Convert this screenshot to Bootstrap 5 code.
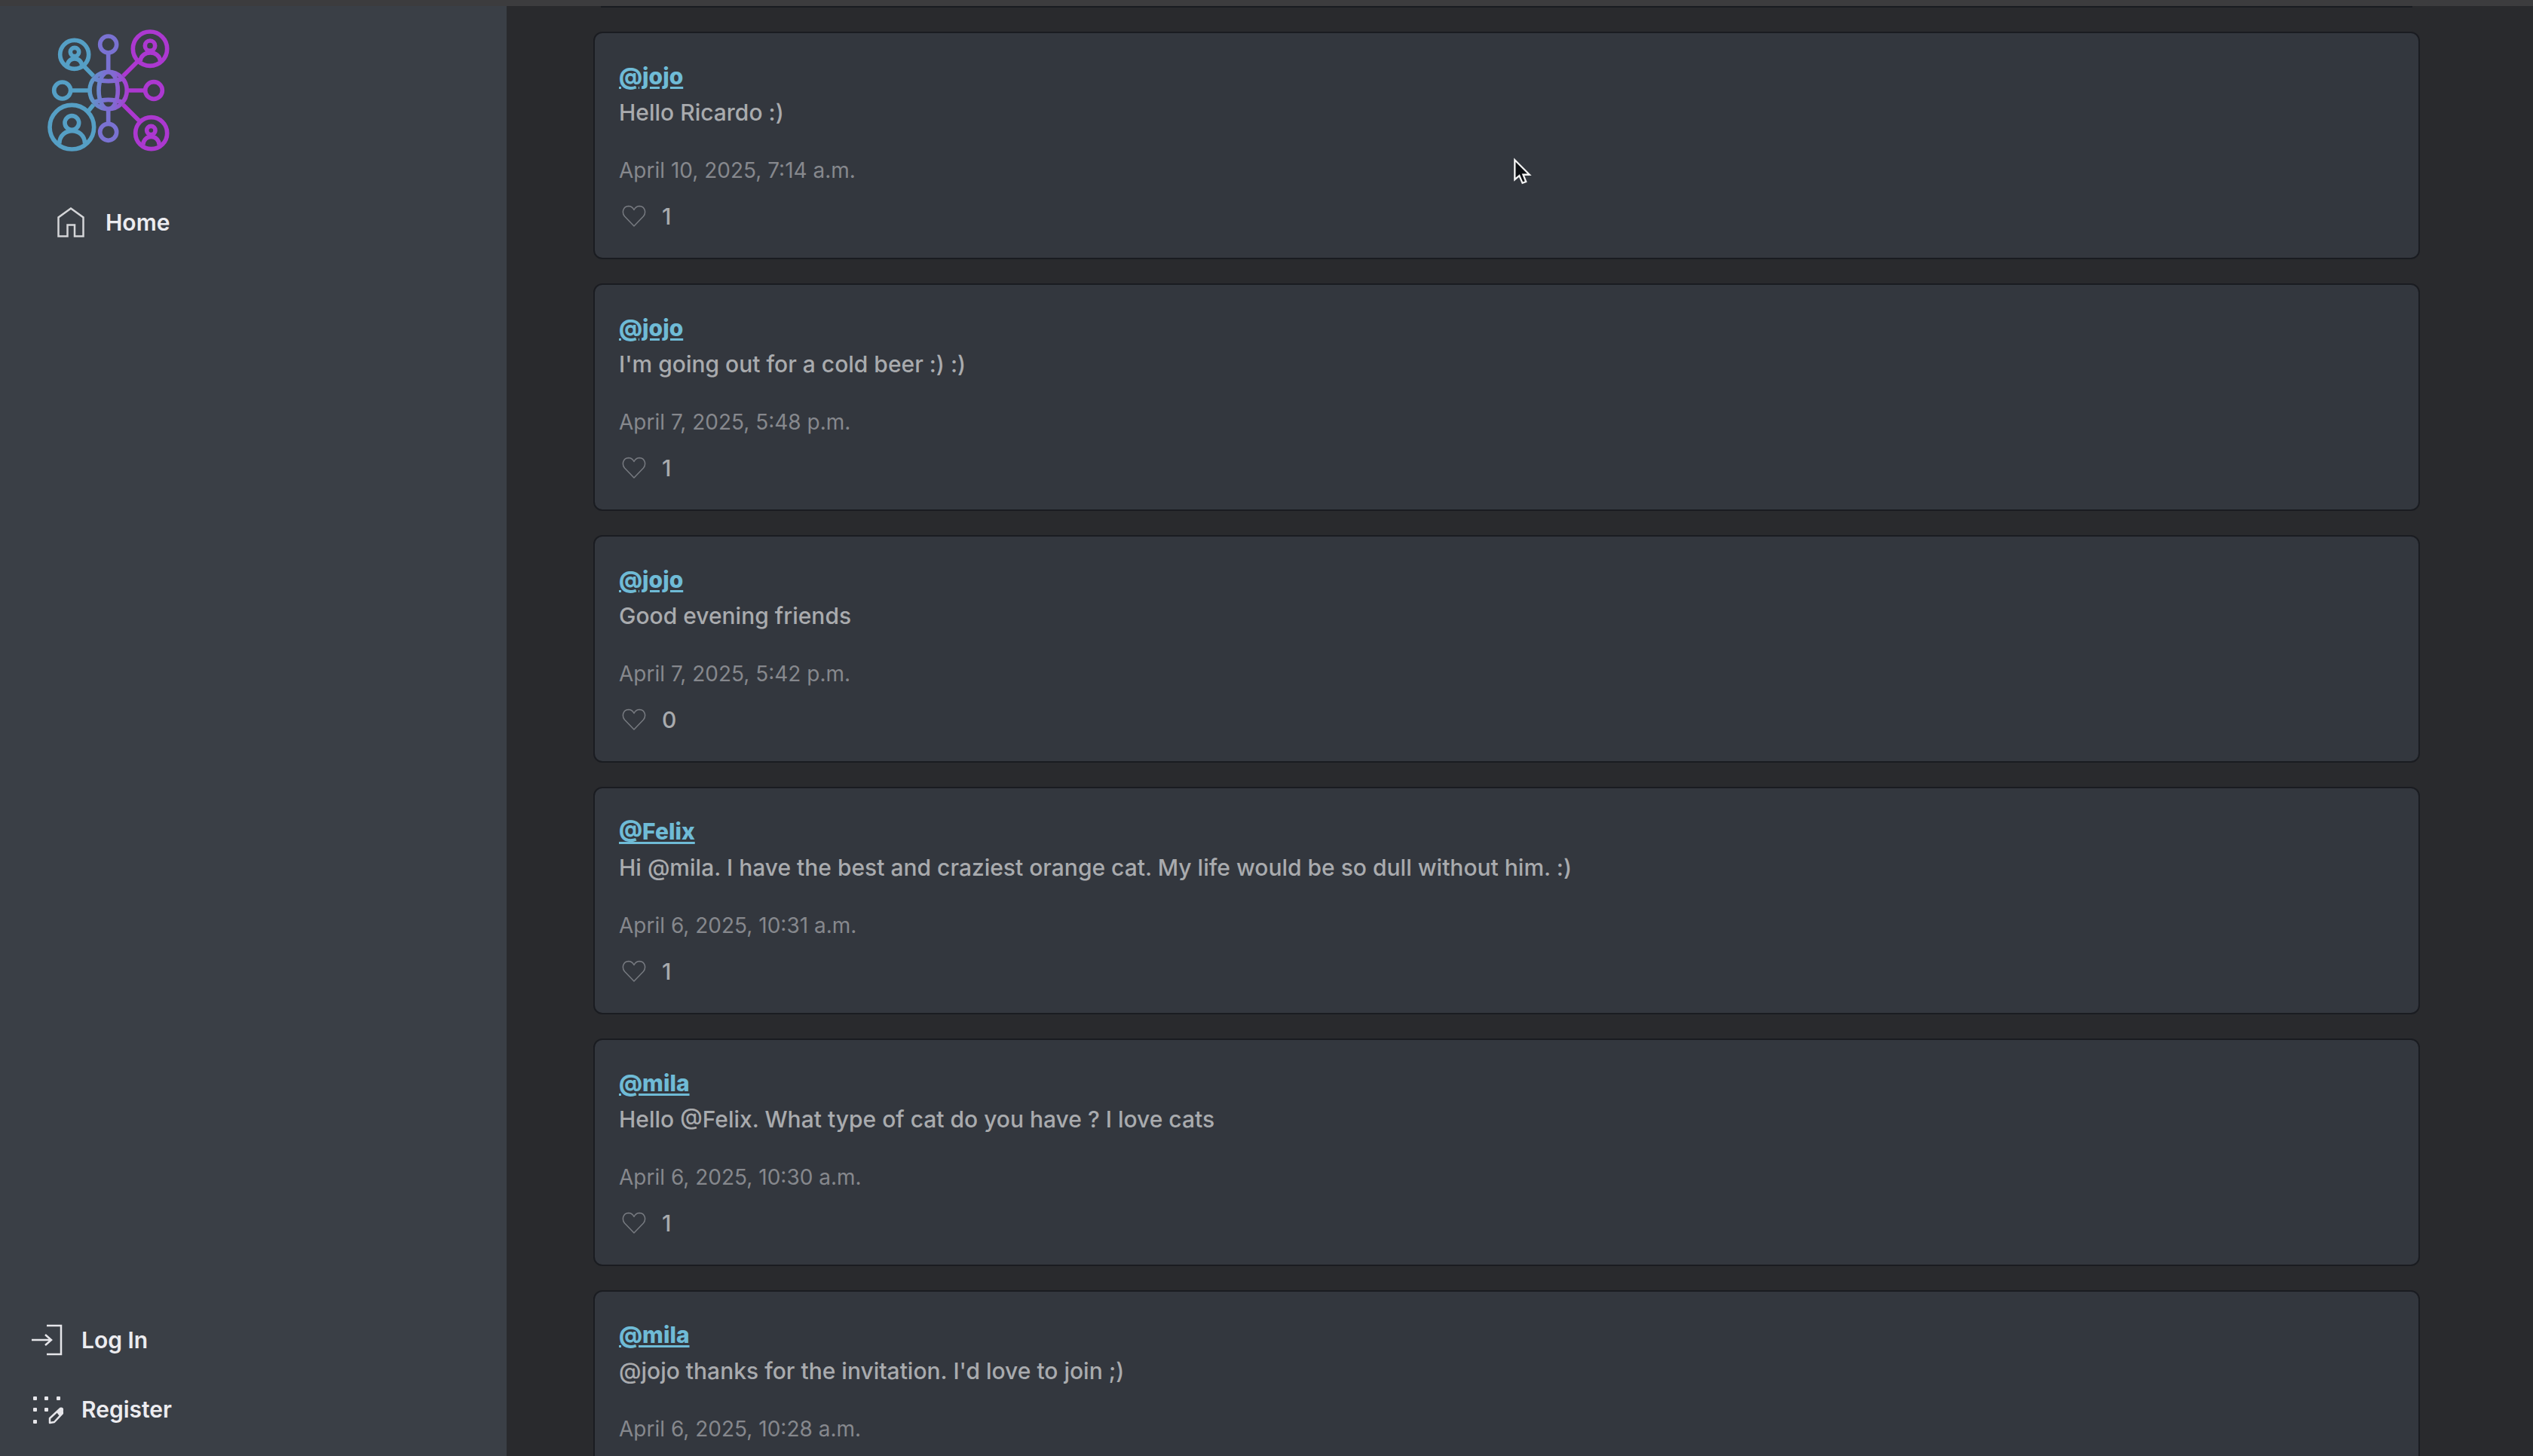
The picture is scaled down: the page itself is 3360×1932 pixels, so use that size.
<!DOCTYPE html>
<html lang="en" data-bs-theme="dark">
<head>
<meta charset="utf-8">
<meta name="viewport" content="width=device-width, initial-scale=1">
<title>Home</title>
<link href="https://cdn.jsdelivr.net/npm/bootstrap@5.3.0/dist/css/bootstrap.min.css" rel="stylesheet">
<style>
  body { font-family: Inter, "Liberation Sans", sans-serif; font-size: 30px; line-height: 48px; background: #292a2d; color: #a9abae; }
  .top-strip { height: 8px; background: #3c3c3e; }
  .side { width: 20%; background: #3a3f46; }
  .brand { margin: 12px 0 0 40px; }
  .brand svg { width: 210px; height: 200px; }
  .side-link { color: #ececf0; font-weight: 600; text-decoration: none; }
  .side-link:hover { color: #fff; }
  .home-link { margin-top: 51px; padding-left: 74px; gap: 26px; }
  .side-foot { padding: 0 0 38px 42px; gap: 44px; }
  .side-foot .side-link { gap: 24px; }
  .feed { padding: 0 150px 0 115px; }
  .tail { height: 2px; margin: 0 10px 32px; background: #191c21; }
  .post { background: #33373e; border: 2px solid #1a1c21; border-radius: 12px; margin-bottom: 32px; }
  .post .card-body { padding: 33px 32px 31px; color: #a9abae; font-weight: 500; }
  .author { color: #6fbbd6; font-weight: 800; text-underline-offset: 3px; text-decoration-thickness: 3px; }
  .when { font-size: 28px; font-weight: 400; line-height: 42px; color: #86888d; margin: 32px 0 16px; }
  .like { border: 0; background: none; padding: 0 4px; line-height: 0; color: #777a80; }
  .likes { gap: 17px; }
  .pointer { left: 2007px; top: 209px; }
</style>
<script src="https://cdn.jsdelivr.net/npm/bootstrap@5.3.0/dist/js/bootstrap.bundle.min.js"></script>
</head>
<body>
<svg class="d-none">
  <symbol id="heart" viewBox="0 0 32 32"><path d="M16 29 L3.5 16 C-.5 11 1.500 3 8.500 2.500 C12 2.500 14.500 4.500 16 7.500 C17.500 4.500 20 2.500 23.500 2.500 C30.500 3 32.500 11 28.500 16 Z" fill="none" stroke="currentColor" stroke-width="1.500" stroke-linejoin="round"/></symbol>
</svg>
<div class="d-flex flex-column vh-100 overflow-hidden">
  <div class="top-strip flex-shrink-0"></div>
  <div class="d-flex flex-grow-1 overflow-hidden">
    <nav class="side d-flex flex-column flex-shrink-0" aria-label="Main">
      <a class="brand" href="#" aria-label="Network">
        <svg viewBox="0 0 630 600" fill="none" stroke-width="17" class="d-block">
          <g stroke="#559fc5">
            <path d="M211 200 252 242M166 300H240M232 382 252 357"/>
            <circle cx="176" cy="157" r="57"/><circle cx="177" cy="147" r="17"/><path d="M148 203C148 164 206 164 206 203"/>
            <circle cx="128" cy="300" r="33"/>
            <circle cx="166" cy="446" r="88"/><circle cx="166" cy="429" r="28"/><path d="M116 512C118 444 216 444 218 512"/>
          </g>
          <g stroke="#ac38d0">
            <path d="M370 242 430 182M385 300H453M370 357 433 420"/>
            <circle cx="477" cy="134" r="68"/><circle cx="477" cy="122" r="20"/><path d="M438 184C442 138 514 138 518 184"/>
            <circle cx="492" cy="300" r="34"/>
            <circle cx="482" cy="470" r="63"/><circle cx="481" cy="459" r="17"/><path d="M449 518C451 473 512 473 514 518"/>
          </g>
          <g stroke="#7a72d2">
            <circle cx="311" cy="117" r="33"/><path d="M311 154V222M311 378V430"/><circle cx="311" cy="466" r="33"/>
          </g>
          <g stroke="url(#globe)">
            <circle cx="311" cy="300" r="74"/>
            <ellipse cx="311" cy="300" rx="38" ry="74"/>
            <path d="M249 252Q311 274 373 252M249 348Q311 326 373 348"/>
          </g>
          <defs><linearGradient id="globe" gradientUnits="userSpaceOnUse" x1="232" y1="0" x2="392" y2="0"><stop offset="0" stop-color="#599ec7"/><stop offset=".4" stop-color="#7a72d2"/><stop offset=".65" stop-color="#8468d2"/><stop offset="1" stop-color="#ac38d0"/></linearGradient></defs>
        </svg>
      </a>
      <a class="side-link home-link d-flex align-items-center" href="#">
        <svg width="40" height="42" viewBox="0 0 40 42" fill="none" stroke="#d4d5d8" stroke-width="2.500"><path d="M15.500 39.500H3.500V14.500L20 2.500 36.500 14.500V39.500H25V24.500H15.500Z"/></svg>
        <span>Home</span>
      </a>
      <div class="side-foot d-flex flex-column mt-auto">
        <a class="side-link d-flex align-items-center" href="#">
          <svg width="42" height="42" viewBox="0 0 42 42" fill="none" stroke="#e6e6ea" stroke-width="2.500"><path d="M20 2H39V40H20M0 21H26M18 14 26 21 18 28"/></svg>
          <span>Log In</span>
        </a>
        <a class="side-link d-flex align-items-center" href="#">
          <svg width="42" height="42" viewBox="0 0 42 42" fill="#e6e6ea"><rect x="2" y="4" width="5" height="5" rx="1"/><rect x="17" y="4" width="5" height="5" rx="1"/><rect x="33" y="4" width="5" height="5" rx="1"/><rect x="2" y="19" width="5" height="5" rx="1"/><rect x="17" y="19" width="5" height="5" rx="1"/><rect x="2" y="35" width="5" height="5" rx="1"/><path d="M24 33 38 20Q41 19 43 24L30 38 24 39Z" fill="none" stroke="#e6e6ea" stroke-width="2.500" stroke-linejoin="round"/><path d="M33 25 38 20Q41 20 42 25L37 30Z"/></svg>
          <span>Register</span>
        </a>
      </div>
    </nav>
    <main class="feed flex-grow-1 overflow-hidden">
      <div class="tail"></div>
      <article class="card post"><div class="card-body">
        <a class="author" href="#">@jojo</a>
        <p class="m-0">Hello Ricardo :)</p>
        <p class="when">April 10, 2025, 7:14 a.m.</p>
        <div class="likes d-flex align-items-center"><button class="like" type="button" aria-label="Like"><svg width="32" height="32"><use href="#heart"/></svg></button><span>1</span></div>
      </div></article>
      <article class="card post"><div class="card-body">
        <a class="author" href="#">@jojo</a>
        <p class="m-0">I'm going out for a cold beer :) :)</p>
        <p class="when">April 7, 2025, 5:48 p.m.</p>
        <div class="likes d-flex align-items-center"><button class="like" type="button" aria-label="Like"><svg width="32" height="32"><use href="#heart"/></svg></button><span>1</span></div>
      </div></article>
      <article class="card post"><div class="card-body">
        <a class="author" href="#">@jojo</a>
        <p class="m-0">Good evening friends</p>
        <p class="when">April 7, 2025, 5:42 p.m.</p>
        <div class="likes d-flex align-items-center"><button class="like" type="button" aria-label="Like"><svg width="32" height="32"><use href="#heart"/></svg></button><span>0</span></div>
      </div></article>
      <article class="card post"><div class="card-body">
        <a class="author" href="#">@Felix</a>
        <p class="m-0">Hi @mila. I have the best and craziest orange cat. My life would be so dull without him. :)</p>
        <p class="when">April 6, 2025, 10:31 a.m.</p>
        <div class="likes d-flex align-items-center"><button class="like" type="button" aria-label="Like"><svg width="32" height="32"><use href="#heart"/></svg></button><span>1</span></div>
      </div></article>
      <article class="card post"><div class="card-body">
        <a class="author" href="#">@mila</a>
        <p class="m-0">Hello @Felix. What type of cat do you have ? I love cats</p>
        <p class="when">April 6, 2025, 10:30 a.m.</p>
        <div class="likes d-flex align-items-center"><button class="like" type="button" aria-label="Like"><svg width="32" height="32"><use href="#heart"/></svg></button><span>1</span></div>
      </div></article>
      <article class="card post"><div class="card-body">
        <a class="author" href="#">@mila</a>
        <p class="m-0">@jojo thanks for the invitation. I'd love to join ;)</p>
        <p class="when">April 6, 2025, 10:28 a.m.</p>
      </div></article>
    </main>
  </div>
</div>
<svg class="pointer position-absolute" width="26" height="38" viewBox="0 0 28 40" aria-hidden="true"><path d="M2.500 3V31L9 25.500 13.500 36 18.500 34 14.500 24H23.500Z" fill="#0d0f13" stroke="#f2f2f2" stroke-width="2.500"/></svg>
</body>
</html>
